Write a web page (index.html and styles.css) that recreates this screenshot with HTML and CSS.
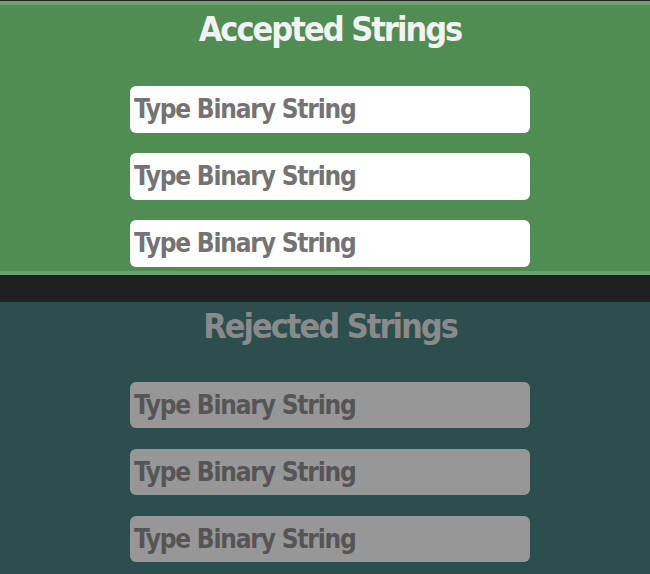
FILE: index.html
```html
<!DOCTYPE html>
<html lang="en">
<head>
    <meta charset="UTF-8">
    <meta name="viewport" content="width=device-width, initial-scale=1.0">
    <title>Binary Strings</title>
    <link rel="stylesheet" href="styles.css">
</head>
<body>
    <section class="panel accepted">
        <h2 class="panel-title">Accepted Strings</h2>
        <div class="string-list">
            <input type="text" class="string-box" placeholder="Type Binary String">
            <input type="text" class="string-box" placeholder="Type Binary String">
            <input type="text" class="string-box" placeholder="Type Binary String">
        </div>
    </section>

    <section class="panel rejected">
        <h2 class="panel-title">Rejected Strings</h2>
        <div class="string-list">
            <input type="text" class="string-box" placeholder="Type Binary String">
            <input type="text" class="string-box" placeholder="Type Binary String">
            <input type="text" class="string-box" placeholder="Type Binary String">
        </div>
    </section>
</body>
</html>
```

FILE: styles.css
```css
* {
    font-family: "DejaVu Sans Condensed", "Roboto", sans-serif;
    box-sizing: border-box;
}

body {
    margin: 0;
    padding-top: 1px;
    background-color: #202020;
}

.panel {
    display: flex;
    flex-direction: column;
    align-items: center;
    padding-left: 10px;
}

.accepted {
    background-color: #4f8d52;
    border-top: 4px solid #6aa36b;
    border-bottom: 4px solid #6aa36b;
    padding-bottom: 4px;
}

.rejected {
    margin-top: 27px;
    background-color: #2c4e4c;
    padding-bottom: 12px;
}

.panel-title {
    margin: 0;
    font-size: 34px;
    font-weight: bold;
    letter-spacing: -2px;
    line-height: 48px;
    color: #f2f2f2;
}

.rejected .panel-title {
    color: #8a8a8a;
}

.string-list {
    display: flex;
    flex-direction: column;
    gap: 20.5px;
    margin-top: 33px;
}

.rejected .string-list {
    margin-top: 32px;
}

.string-box {
    width: 400px;
    height: 46.5px;
    padding: 0 4px;
    border: none;
    border-radius: 6px;
    font-size: 26px;
    font-weight: bold;
    letter-spacing: -1.2px;
    background-color: #ffffff;
    color: #737373;
}

.string-box::placeholder {
    color: #737373;
    opacity: 1;
}

.rejected .string-box {
    background-color: #979797;
}

.rejected .string-box::placeholder {
    color: #555555;
}
```
